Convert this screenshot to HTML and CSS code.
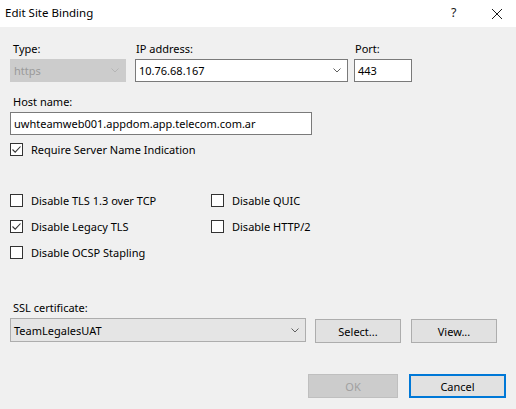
FILE: index.html
```html
<!DOCTYPE html>
<html lang="en">
<head>
<meta charset="utf-8">
<title>Edit Site Binding</title>
<link rel="stylesheet" href="styles.css">
</head>
<body>
<div class="dialog">
  <header class="titlebar">
    <span class="title">Edit Site Binding</span>
    <span class="help">?</span>
    <span class="close">
      <svg width="12" height="12" viewBox="0 0 12 12"><path d="M1 1 L11 11 M11 1 L1 11" stroke="#1a1a1a" stroke-width="1" fill="none"/></svg>
    </span>
  </header>

  <main class="body">
    <div class="row-top">
      <div class="field f-type">
        <label class="lbl lbl-in3">Type:</label>
        <div class="combo disabled">
          <span class="val">https</span>
          <svg class="chev" width="8" height="5" viewBox="0 0 8 5"><path d="M0.5 0.5 L4 4 L7.5 0.5" stroke="#b5b5b5" fill="none"/></svg>
        </div>
      </div>
      <div class="field f-ip">
        <label class="lbl lbl-in1">IP address:</label>
        <div class="combo editable">
          <span class="val">10.76.68.167</span>
          <svg class="chev" width="8" height="5" viewBox="0 0 8 5"><path d="M0.5 0.5 L4 4 L7.5 0.5" stroke="#606060" fill="none"/></svg>
        </div>
      </div>
      <div class="field f-port">
        <label class="lbl lbl-in1">Port:</label>
        <div class="textbox"><span class="val">443</span></div>
      </div>
    </div>

    <div class="field f-host">
      <label class="lbl lbl-in3">Host name:</label>
      <div class="textbox host"><span class="val">uwhteamweb001.appdom.app.telecom.com.ar</span></div>
    </div>

    <div class="check sni">
      <span class="box checked"><svg width="11" height="11" viewBox="0 0 11 11"><path d="M1.5 5.5 L4.2 8.2 L9.5 2.5" stroke="#333" stroke-width="1.1" fill="none"/></svg></span>
      <span>Require Server Name Indication</span>
    </div>

    <div class="options">
      <div class="check"><span class="box"></span><span>Disable TLS 1.3 over TCP</span></div>
      <div class="check"><span class="box"></span><span>Disable QUIC</span></div>
      <div class="check"><span class="box checked"><svg width="11" height="11" viewBox="0 0 11 11"><path d="M1.5 5.5 L4.2 8.2 L9.5 2.5" stroke="#333" stroke-width="1.1" fill="none"/></svg></span><span>Disable Legacy TLS</span></div>
      <div class="check"><span class="box"></span><span>Disable HTTP/2</span></div>
      <div class="check"><span class="box"></span><span>Disable OCSP Stapling</span></div>
    </div>

    <div class="field f-cert">
      <label class="lbl lbl-in3">SSL certificate:</label>
      <div class="cert-row">
        <div class="combo dropdown">
          <span class="val">TeamLegalesUAT</span>
          <svg class="chev" width="8" height="5" viewBox="0 0 8 5"><path d="M0.5 0.5 L4 4 L7.5 0.5" stroke="#606060" fill="none"/></svg>
        </div>
        <button class="btn btn-select">Select...</button>
        <button class="btn btn-view">View...</button>
      </div>
    </div>

    <div class="actions">
      <button class="btn btn-ok" disabled>OK</button>
      <button class="btn btn-cancel">Cancel</button>
    </div>
  </main>
</div>
</body>
</html>
```

FILE: styles.css
```css
* { box-sizing: border-box; }

html, body {
  margin: 0;
  padding: 0;
}

body {
  width: 516px;
  height: 409px;
  background: #f0f0f0;
  font-family: "Noto Sans", "Open Sans", sans-serif;
  font-size: 11px;
  color: #000;
  overflow: hidden;
}

.dialog {
  width: 516px;
  height: 409px;
  display: flex;
  flex-direction: column;
}

/* window caption */
.titlebar {
  height: 27px;
  background: #fff;
  display: flex;
  align-items: center;
  padding-left: 5px;
}

.title {
  flex: 1;
  font-size: 11.5px;
  color: #000;
  padding-bottom: 2px;
}

.help {
  width: 14px;
  font-size: 12.5px;
  color: #1a1a1a;
  margin-right: 26px;
  padding-bottom: 2px;
}

.close {
  display: flex;
  margin-right: 13px;
}

/* form area */
.body {
  flex: 1;
  padding: 14px 0 0 10px;
  display: flex;
  flex-direction: column;
}

.field {
  display: flex;
  flex-direction: column;
}

.lbl {
  display: block;
  height: 15px;
  line-height: 15px;
  margin-bottom: 3px;
  white-space: nowrap;
}

.lbl-in3 { padding-left: 3px; }
.lbl-in1 { padding-left: 1px; }

.val {
  white-space: nowrap;
  padding-left: 3px;
}

.row-top {
  display: flex;
}

.f-type { width: 116px; }
.f-ip { width: 213px; margin-left: 9px; }
.f-port { width: 58px; margin-left: 6px; }

.combo, .textbox {
  height: 23px;
  display: flex;
  align-items: center;
  position: relative;
}

.combo .val { flex: 1; }

.chev {
  margin-right: 6px;
}

.combo.disabled {
  background: #cccccc;
  border: 1px solid #cccccc;
  color: #9a9a9a;
}

.combo.editable, .textbox {
  background: #fff;
  border: 1px solid #7a7a7a;
}

.f-host {
  margin-top: 12px;
}

.textbox.host { width: 302px; }

/* checkboxes */
.check {
  display: flex;
  align-items: center;
  height: 15px;
  white-space: nowrap;
}

.box {
  width: 13px;
  height: 13px;
  border: 1px solid #333;
  background: #fff;
  margin-right: 8px;
  display: flex;
  align-items: center;
  justify-content: center;
  flex: none;
}

.box.checked svg { display: block; }

.sni {
  margin-top: 7px;
}

.options {
  margin-top: 36px;
  display: grid;
  grid-template-columns: 201px auto;
  row-gap: 11px;
}

.f-cert {
  margin-top: 40px;
}

.cert-row {
  display: flex;
  align-items: flex-start;
}

.combo.dropdown {
  width: 296px;
  height: 24px;
  background: #e5e5e5;
  border: 1px solid #adadad;
}

.btn {
  font-family: inherit;
  font-size: 11px;
  color: #000;
  background: #e1e1e1;
  border: 1px solid #adadad;
  height: 24px;
  padding: 0;
  margin: 0;
}

.btn-select { width: 86px; margin-left: 9px; margin-top: 1px; }
.btn-view { width: 86px; margin-left: 10px; margin-top: 1px; }

.actions {
  margin-top: 31px;
  display: flex;
  padding-left: 298px;
}

.btn-ok {
  width: 90px;
  background: #cccccc;
  border-color: #bfbfbf;
  color: #a0a0a0;
}

.btn-cancel {
  width: 97px;
  margin-left: 11px;
  border: 2px solid #0078d7;
}
```
